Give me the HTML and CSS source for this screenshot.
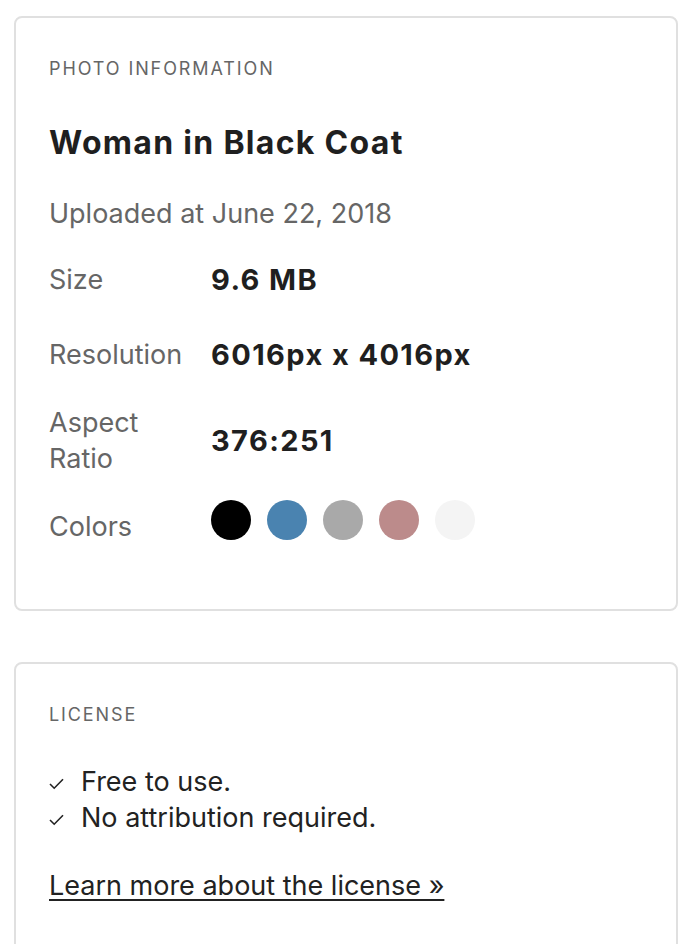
FILE: index.html
```html
<!DOCTYPE html>
<html lang="en">
<head>
<meta charset="utf-8">
<title>Photo information</title>
<link rel="stylesheet" href="styles.css">
</head>
<body>
  <section class="card card-info">
    <h2 class="eyebrow">PHOTO INFORMATION</h2>
    <h1 class="title">Woman in Black Coat</h1>
    <p class="uploaded">Uploaded at June 22, 2018</p>
    <div class="row row-size">
      <div class="label">Size</div>
      <div class="value">9.6 MB</div>
    </div>
    <div class="row row-res">
      <div class="label">Resolution</div>
      <div class="value">6016px x 4016px</div>
    </div>
    <div class="row row-aspect">
      <div class="label">Aspect<br>Ratio</div>
      <div class="value">376:251</div>
    </div>
    <div class="row row-colors">
      <div class="label label-colors">Colors</div>
      <div class="swatches">
        <span class="swatch sw-black"></span>
        <span class="swatch sw-blue"></span>
        <span class="swatch sw-gray"></span>
        <span class="swatch sw-rose"></span>
        <span class="swatch sw-white"></span>
      </div>
    </div>
  </section>

  <section class="card card-license">
    <h2 class="eyebrow">LICENSE</h2>
    <ul class="checks">
      <li><svg class="check" width="15" height="12" viewBox="0 0 15 12"><path d="M1 6 L5.2 10.2 L14 1.2" fill="none" stroke="#222" stroke-width="1.6"/></svg>Free to use.</li>
      <li><svg class="check" width="15" height="12" viewBox="0 0 15 12"><path d="M1 6 L5.2 10.2 L14 1.2" fill="none" stroke="#222" stroke-width="1.6"/></svg>No attribution required.</li>
    </ul>
    <a class="more" href="#">Learn more about the license »</a>
  </section>
</body>
</html>
```

FILE: styles.css
```css
html, body {
  margin: 0;
  padding: 0;
  background: #fff;
}

body {
  font-family: Inter, "Noto Sans", "Liberation Sans", sans-serif;
  color: #222;
  padding: 16px 0 0 14px;
}

.card {
  border: 2px solid #e0e0e0;
  border-radius: 8px;
  padding: 39px 33px 64px;
  background: #fff;
}

.card-license {
  margin-top: 51px;
  padding-bottom: 60px;
}

.eyebrow {
  margin: 0;
  font-size: 18px;
  line-height: 24px;
  font-weight: 400;
  letter-spacing: 1.9px;
  color: #666;
}

.title {
  margin: 42px 0 0;
  font-size: 32px;
  line-height: 40px;
  font-weight: 700;
  letter-spacing: 1.3px;
  color: #1f1f1f;
}

.uploaded {
  margin: 33px 0 0;
  font-size: 27px;
  line-height: 36px;
  color: #666;
}

.row {
  display: flex;
  align-items: center;
}

.row-size { margin-top: 30px; }
.row-res { margin-top: 39px; }
.row-aspect { margin-top: 32px; }
.row-colors { margin-top: 23px; align-items: flex-start; }

.label {
  width: 162px;
  flex: none;
  font-size: 27px;
  line-height: 36px;
  color: #666;
}

.label-colors {
  padding-top: 9px;
}

.value {
  font-size: 29px;
  line-height: 36px;
  font-weight: 700;
  letter-spacing: 1.4px;
  color: #1f1f1f;
}

.swatches {
  display: flex;
  gap: 16px;
}

.swatch {
  width: 40px;
  height: 40px;
  border-radius: 50%;
  display: block;
}

.sw-black { background: #000; }
.sw-blue { background: #4a83b0; }
.sw-gray { background: #a9a9a9; }
.sw-rose { background: #bc8b8b; }
.sw-white { background: #f4f4f4; }

.checks {
  list-style: none;
  margin: 37px 0 0;
  padding: 0;
}

.checks li {
  font-size: 27px;
  line-height: 36px;
  color: #222;
  display: flex;
  align-items: center;
}

.check {
  margin-right: 17px;
  margin-top: 3px;
  flex: none;
}

.more {
  display: inline-block;
  margin-top: 32px;
  font-size: 27px;
  line-height: 36px;
  color: #222;
  text-decoration: underline;
  text-underline-offset: 4px;
  text-decoration-thickness: 2px;
}
```
